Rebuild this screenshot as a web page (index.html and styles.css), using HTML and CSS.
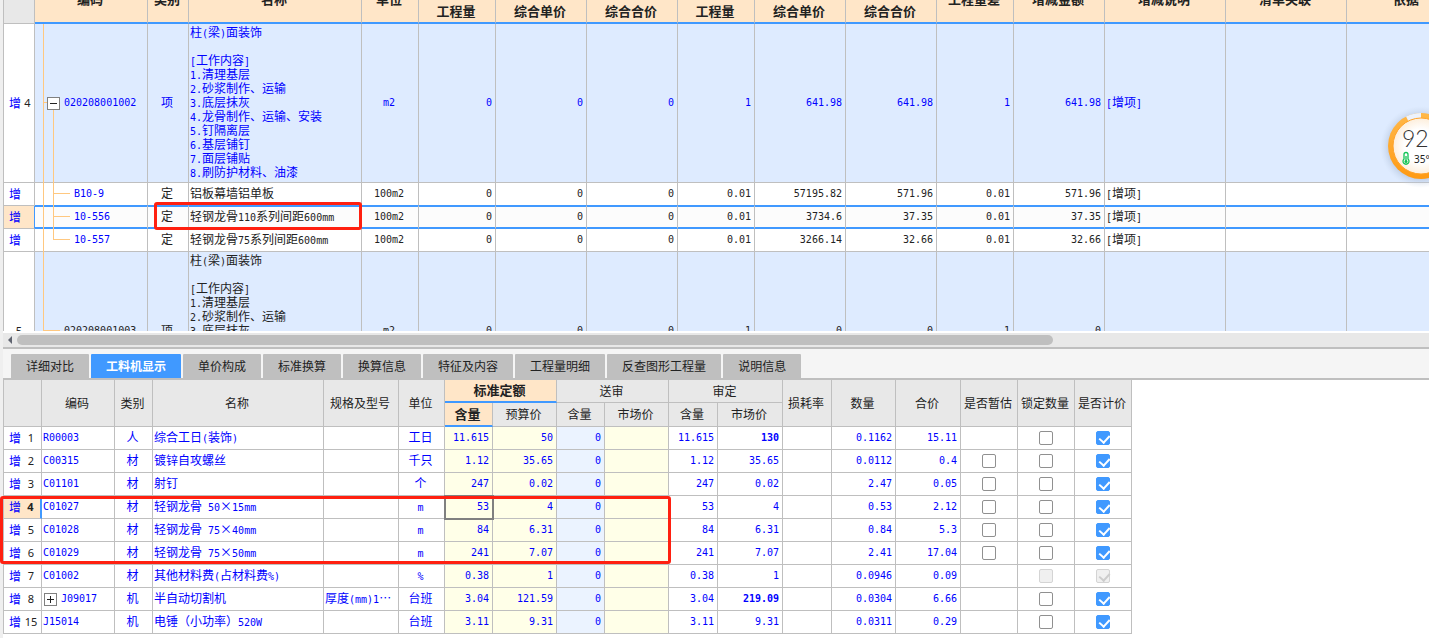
FILE: index.html
```html
<!DOCTYPE html>
<html lang="zh-CN">
<head>
<meta charset="utf-8">
<title>工料机显示</title>
<link rel="stylesheet" href="styles.css">
</head>
<body>
<section class="upper">
  <table class="grid bill">
    <colgroup>
      <col class="w31"><col class="w113"><col class="w41"><col class="w173"><col class="w57">
      <col class="w77"><col class="w91"><col class="w91"><col class="w77"><col class="w91"><col class="w91">
      <col class="w77"><col class="w91"><col class="w121"><col class="w121"><col class="w121">
    </colgroup>
    <thead>
      <tr>
        <th rowspan="2" class="corner"></th><th rowspan="2">编码</th><th rowspan="2">类别</th><th rowspan="2">名称</th><th rowspan="2">单位</th>
        <th colspan="3"></th><th colspan="3"></th>
        <th rowspan="2">工程量差</th><th rowspan="2">增减金额</th><th rowspan="2">增减说明</th><th rowspan="2">清单关联</th><th rowspan="2">依据</th>
      </tr>
      <tr><th>工程量</th><th>综合单价</th><th>综合合价</th><th>工程量</th><th>综合单价</th><th>综合合价</th></tr>
    </thead>
    <tbody>
      <tr class="item added">
        <td><div class="rowhead"><b>增</b><span>4</span></div></td>
        <td class="code"><i class="rail"></i><i class="stub"></i><i class="rail inner half"></i><button class="toggle" aria-label="020208001002"></button>020208001002</td>
        <td>项</td>
        <td class="name">柱<span class="n">(</span>梁<span class="n">)</span>面装饰<br><br><span class="n">[</span>工作内容<span class="n">]</span><br><span class="n">1.</span>清理基层<br><span class="n">2.</span>砂浆制作、运输<br><span class="n">3.</span>底层抹灰<br><span class="n">4.</span>龙骨制作、运输、安装<br><span class="n">5.</span>钉隔离层<br><span class="n">6.</span>基层铺钉<br><span class="n">7.</span>面层铺贴<br><span class="n">8.</span>刷防护材料、油漆</td>
        <td>m2</td><td>0</td><td>0</td><td>0</td><td>1</td><td>641.98</td><td>641.98</td><td>1</td><td>641.98</td>
        <td><span class="n">[</span>增项<span class="n">]</span></td><td></td><td></td>
      </tr>
      <tr class="before">
        <td><div class="rowhead"><b>增</b></div></td>
        <td class="code child"><i class="rail"></i><i class="rail inner"></i><i class="branch"></i>B10-9</td>
        <td>定</td><td class="name">铝板幕墙铝单板</td>
        <td>100m2</td><td>0</td><td>0</td><td>0</td><td>0.01</td><td>57195.82</td><td>571.96</td><td>0.01</td><td>571.96</td>
        <td><span class="n">[</span>增项<span class="n">]</span></td><td></td><td></td>
      </tr>
      <tr class="selected">
        <td><div class="rowhead"><b>增</b></div></td>
        <td class="code child"><i class="rail"></i><i class="rail inner"></i><i class="branch"></i>10-556</td>
        <td>定</td><td class="name">轻钢龙骨<span class="n">110</span>系列间距<span class="n">600mm</span><i class="mark mark-name"></i></td>
        <td>100m2</td><td>0</td><td>0</td><td>0</td><td>0.01</td><td>3734.6</td><td>37.35</td><td>0.01</td><td>37.35</td>
        <td><span class="n">[</span>增项<span class="n">]</span></td><td></td><td></td>
      </tr>
      <tr>
        <td><div class="rowhead"><b>增</b></div></td>
        <td class="code child"><i class="rail"></i><i class="rail inner last"></i><i class="branch"></i>10-557</td>
        <td>定</td><td class="name">轻钢龙骨<span class="n">75</span>系列间距<span class="n">600mm</span></td>
        <td>100m2</td><td>0</td><td>0</td><td>0</td><td>0.01</td><td>3266.14</td><td>32.66</td><td>0.01</td><td>32.66</td>
        <td><span class="n">[</span>增项<span class="n">]</span></td><td></td><td></td>
      </tr>
      <tr class="item">
        <td><div class="rowhead alone"><span>5</span></div></td>
        <td class="code"><i class="rail last"></i><i class="stub long"></i>020208001003</td>
        <td>项</td>
        <td class="name">柱<span class="n">(</span>梁<span class="n">)</span>面装饰<br><br><span class="n">[</span>工作内容<span class="n">]</span><br><span class="n">1.</span>清理基层<br><span class="n">2.</span>砂浆制作、运输<br><span class="n">3.</span>底层抹灰<br><br><br><br><br><br></td>
        <td>m2</td><td>0</td><td>0</td><td>0</td><td>1</td><td>0</td><td>0</td><td>1</td><td>0</td>
        <td></td><td></td><td></td>
      </tr>
    </tbody>
  </table>
</section>

<div class="scrollbar"><button class="arrow" aria-label="◀"></button><div class="track"><div class="thumb"></div></div></div>

<nav class="tabs">
  <button>详细对比</button><button class="active">工料机显示</button><button>单价构成</button><button>标准换算</button><button>换算信息</button><button>特征及内容</button><button>工程量明细</button><button>反查图形工程量</button><button>说明信息</button>
</nav>

<section class="lower">
  <table class="grid res">
    <colgroup>
      <col class="w38"><col class="w73"><col class="w38"><col class="w171"><col class="w75"><col class="w46">
      <col class="w48"><col class="w64"><col class="w48"><col class="w64"><col class="w49"><col class="w65">
      <col class="w49"><col class="w64"><col class="w65"><col class="w57"><col class="w57"><col class="w57">
    </colgroup>
    <thead>
      <tr>
        <th rowspan="2"></th><th rowspan="2">编码</th><th rowspan="2">类别</th><th rowspan="2">名称</th><th rowspan="2">规格及型号</th><th rowspan="2">单位</th>
        <th colspan="2" class="hot">标准定额</th><th colspan="2">送审</th><th colspan="2">审定</th>
        <th rowspan="2">损耗率</th><th rowspan="2">数量</th><th rowspan="2">合价</th>
        <th rowspan="2" id="h-est">是否暂估</th><th rowspan="2" id="h-lock">锁定数量</th><th rowspan="2" id="h-price">是否计价</th>
      </tr>
      <tr><th class="hot">含量</th><th>预算价</th><th>含量</th><th>市场价</th><th>含量</th><th>市场价</th></tr>
    </thead>
    <tbody>
      <tr><td><div class="rowhead"><b>增</b><span>1</span></div></td><td>R00003</td><td>人</td><td>综合工日<span class="n">(</span>装饰<span class="n">)</span></td><td></td><td>工日</td><td>11.615</td><td>50</td><td>0</td><td></td><td>11.615</td><td class="strong">130</td><td></td><td>0.1162</td><td>15.11</td><td></td><td><input type="checkbox" aria-labelledby="h-lock"></td><td><input type="checkbox" aria-labelledby="h-price" checked></td></tr>
      <tr><td><div class="rowhead"><b>增</b><span>2</span></div></td><td>C00315</td><td>材</td><td>镀锌自攻螺丝</td><td></td><td>千只</td><td>1.12</td><td>35.65</td><td>0</td><td></td><td>1.12</td><td>35.65</td><td></td><td>0.0112</td><td>0.4</td><td><input type="checkbox" aria-labelledby="h-est"></td><td><input type="checkbox" aria-labelledby="h-lock"></td><td><input type="checkbox" aria-labelledby="h-price" checked></td></tr>
      <tr><td><div class="rowhead"><b>增</b><span>3</span></div></td><td>C01101</td><td>材</td><td>射钉</td><td></td><td>个</td><td>247</td><td>0.02</td><td>0</td><td></td><td>247</td><td>0.02</td><td></td><td>2.47</td><td>0.05</td><td><input type="checkbox" aria-labelledby="h-est"></td><td><input type="checkbox" aria-labelledby="h-lock"></td><td><input type="checkbox" aria-labelledby="h-price" checked></td></tr>
      <tr class="current"><td><div class="rowhead"><b>增</b><span>4</span></div></td><td>C01027</td><td>材</td><td>轻钢龙骨<span class="n"> 50</span>×<span class="n">15mm</span></td><td></td><td><span class="n">m</span></td><td class="focus">53</td><td>4</td><td>0</td><td></td><td>53</td><td>4</td><td></td><td>0.53</td><td>2.12</td><td><input type="checkbox" aria-labelledby="h-est"></td><td><input type="checkbox" aria-labelledby="h-lock"></td><td><input type="checkbox" aria-labelledby="h-price" checked></td></tr>
      <tr><td><div class="rowhead"><b>增</b><span>5</span></div></td><td>C01028</td><td>材</td><td>轻钢龙骨<span class="n"> 75</span>×<span class="n">40mm</span></td><td></td><td><span class="n">m</span></td><td>84</td><td>6.31</td><td>0</td><td></td><td>84</td><td>6.31</td><td></td><td>0.84</td><td>5.3</td><td><input type="checkbox" aria-labelledby="h-est"></td><td><input type="checkbox" aria-labelledby="h-lock"></td><td><input type="checkbox" aria-labelledby="h-price" checked></td></tr>
      <tr><td><div class="rowhead"><b>增</b><span>6</span></div></td><td>C01029</td><td>材</td><td>轻钢龙骨<span class="n"> 75</span>×<span class="n">50mm</span></td><td></td><td><span class="n">m</span></td><td>241</td><td>7.07</td><td>0</td><td></td><td>241</td><td>7.07</td><td></td><td>2.41</td><td>17.04</td><td><input type="checkbox" aria-labelledby="h-est"></td><td><input type="checkbox" aria-labelledby="h-lock"></td><td><input type="checkbox" aria-labelledby="h-price" checked></td></tr>
      <tr><td><div class="rowhead"><b>增</b><span>7</span></div></td><td>C01002</td><td>材</td><td>其他材料费<span class="n">(</span>占材料费<span class="n">%)</span></td><td></td><td><span class="n">%</span></td><td>0.38</td><td>1</td><td>0</td><td></td><td>0.38</td><td>1</td><td></td><td>0.0946</td><td>0.09</td><td></td><td><input type="checkbox" aria-labelledby="h-lock" disabled></td><td><input type="checkbox" aria-labelledby="h-price" checked disabled></td></tr>
      <tr><td><div class="rowhead"><b>增</b><span>8</span></div></td><td><button class="toggle plus" aria-label="J09017"></button>J09017</td><td>机</td><td>半自动切割机</td><td>厚度<span class="n">(mm)1</span>…</td><td>台班</td><td>3.04</td><td>121.59</td><td>0</td><td></td><td>3.04</td><td class="strong">219.09</td><td></td><td>0.0304</td><td>6.66</td><td></td><td><input type="checkbox" aria-labelledby="h-lock"></td><td><input type="checkbox" aria-labelledby="h-price" checked></td></tr>
      <tr><td><div class="rowhead"><b>增</b><span>15</span></div></td><td>J15014</td><td>机</td><td>电锤（小功率）<span class="n">520W</span></td><td></td><td>台班</td><td>3.11</td><td>9.31</td><td>0</td><td></td><td>3.11</td><td>9.31</td><td></td><td>0.0311</td><td>0.29</td><td></td><td><input type="checkbox" aria-labelledby="h-lock"></td><td><input type="checkbox" aria-labelledby="h-price" checked></td></tr>
    </tbody>
  </table>
  <i class="mark mark-rows"></i>
</section>

<svg class="gauge" width="84" height="84" viewBox="0 0 84 84">
  <defs>
    <linearGradient id="ring" x1="0" y1="0" x2="0" y2="1"><stop offset="0" stop-color="#ffb849"/><stop offset="1" stop-color="#ff9a12"/></linearGradient>
    <radialGradient id="face"><stop offset="0.6" stop-color="#fff"/><stop offset="1" stop-color="#fdeedb"/></radialGradient>
    <radialGradient id="halo"><stop offset="0.76" stop-color="#a9b9d2" stop-opacity="0.6"/><stop offset="1" stop-color="#c8d6ea" stop-opacity="0"/></radialGradient>
  </defs>
  <circle cx="42" cy="43" r="41" fill="url(#halo)"/>
  <circle cx="42" cy="42" r="33" fill="url(#ring)"/>
  <path d="M42 42 L27 12.500 A33 33 0 0 1 42 9 Z" fill="#edf2fb"/>
  <circle cx="42" cy="42" r="28" fill="url(#face)" stroke="#ffa32a" stroke-width="1"/>
  <text x="23" y="43" class="gauge-num">92<tspan class="gauge-unit">%</tspan></text>
  <path d="M25 50.500 a2 2 0 0 1 4 0 v4.500 a3 3 0 1 1 -4 0 Z" fill="none" stroke="#12c455" stroke-width="1.300"/>
  <path d="M27 52 v5" stroke="#12c455" stroke-width="1.300"/><circle cx="27" cy="57.500" r="1.500" fill="#12c455"/>
  <text x="35" y="59" class="gauge-temp">35°C</text>
</svg>
</body>
</html>
```

FILE: styles.css
```css
* { box-sizing: border-box; }

body {
  margin: 0;
  height: 100vh;
  display: flex;
  flex-direction: column;
  position: relative;
  overflow: hidden;
  padding-left: 3px;
  background: #efefef;
  color: #222;
  font: 12px/14px "Noto Sans CJK SC", sans-serif;
}

button { margin: 0; padding: 0; border: 0; font: inherit; color: inherit; }

.upper { flex: 1; min-height: 0; overflow: hidden; background: #fff; }
.lower { position: relative; background: #fff; padding-bottom: 4px; }

/* Grid */
.grid {
  table-layout: fixed;
  width: 0;
  border-collapse: separate;
  border-spacing: 0;
  border-left: 1px solid #bfbfbf;
}
.grid th, .grid td {
  height: 23px;
  padding: 0 3px 2px 1px;
  border-right: 1px solid #bfbfbf;
  border-bottom: 1px solid #bfbfbf;
  white-space: nowrap;
  text-align: center;
  vertical-align: middle;
}
.grid th { background: #e8e8e8; font-weight: 400; padding: 0 2px 1px 0; }
.grid td:first-child { padding: 0 0 1px; background: #fff; }

.n, .grid .code, .bill td:nth-child(n+5):nth-child(-n+13),
.res td:nth-child(2), .res td:nth-child(n+7):nth-child(-n+15) {
  font-family: "DejaVu Sans Mono", monospace;
  font-size: 10px;
  padding-bottom: 0;
}
.n { white-space: pre; line-height: 1; }

.rowhead { display: flex; align-items: center; padding-left: 5px; }
.rowhead.alone { padding-left: 0; }
.rowhead b { color: #00f; font-weight: 400; flex: none; width: 12px; }
.rowhead span { flex: 1; text-align: center; font: 11px/14px "Noto Sans", sans-serif; }

.w31 { width: 31px; } .w38 { width: 38px; } .w41 { width: 41px; } .w46 { width: 46px; }
.w48 { width: 48px; } .w49 { width: 49px; } .w57 { width: 57px; } .w64 { width: 64px; }
.w65 { width: 65px; } .w73 { width: 73px; } .w75 { width: 75px; }
.w77 { width: 77px; } .w91 { width: 91px; } .w113 { width: 113px; } .w121 { width: 121px; }
.w171 { width: 171px; } .w173 { width: 173px; }

/* Bill table: the group header row is scrolled out of view */
.bill { margin-top: -24px; }
.bill th { height: 24px; background: #ffe6c8; font-weight: 700; font-size: 13px; }
.bill thead tr:first-child th[rowspan], .bill thead tr:last-child th { border-bottom: 2px solid #4099ff; }
.bill thead tr:first-child th.corner { background: #e8e8e8; border-bottom: 1px solid #bfbfbf; }
.bill td:nth-child(n+6):nth-child(-n+13) { text-align: right; }
.bill td:nth-child(14) { text-align: left; }
.bill .name, .bill .code { text-align: left; }
.bill .code { position: relative; padding-left: 29px; }
.bill .code.child { padding-left: 39px; color: #00f; }
.item td { height: 159px; background: #deebff; }
.added td { color: #00f; }
.added .rowhead span { color: #222; }

.before td:not(:first-child) { border-bottom-color: #4099ff; }
.selected td { background: #fcfcfc; border-bottom-color: #4099ff; box-shadow: inset 0 1px #4099ff, inset 0 -1px #4099ff; }
.grid .selected td:first-child { background: #ffe6c8; border-right-color: #4099ff; border-bottom-color: #bfbfbf; box-shadow: none; }
.selected .name { position: relative; }

.rail, .stub, .branch { position: absolute; background: #ffc880; }
.rail { left: 8px; top: 0; bottom: -1px; width: 1px; }
.rail.inner { left: 18px; }
.rail.half { top: 50%; }
.rail.last { bottom: 50%; }
.stub, .branch { top: calc(50% - 1px); height: 1px; }
.stub { left: 8px; width: 4px; }
.stub.long { width: 17px; }
.branch { left: 18px; width: 17px; }

.toggle {
  position: relative;
  width: 13px;
  height: 13px;
  margin: 0 4px 0 1px;
  border: 1px solid #808080;
  background: #fff;
  vertical-align: middle;
}
.bill .toggle { margin-left: -17px; }
.toggle::before, .toggle.plus::after { content: ""; position: absolute; left: 2px; top: 5px; width: 7px; height: 1px; background: #222; }
.toggle.plus::after { left: 5px; top: 2px; width: 1px; height: 7px; }

/* Scrollbar */
.scrollbar { display: flex; align-items: center; height: 18px; border-top: 2px solid #fff; border-bottom: 2px solid #bfbfbf; background: #e8e8e8; }
.arrow { flex: none; width: 14px; height: 14px; background: transparent; }
.arrow::before { content: ""; display: block; width: 0; margin-left: 5px; border: 4px solid transparent; border-right: 4px solid #606470; border-left: 0; }
.track { flex: 1; }
.thumb { width: 73.4%; height: 10px; border-radius: 5px; background: #bfbfbf; }

/* Tabs */
.tabs { display: flex; gap: 2px; padding: 5px 8px 0; background: #f5f5f5; border-bottom: 2px solid #bfbfbf; }
.tabs button { height: 24px; padding: 0 15px; background: #bfbfbf; border-radius: 1px 1px 0 0; }
.tabs .active { background: #4099ff; color: #fff; font-weight: 700; }

/* Resource table */
.res td { color: #00f; }
.res thead tr:last-child th { height: 24px; }
.res th.hot { background: #ffe6c8; font-weight: 700; font-size: 13px; border-bottom: 2px solid #4099ff; }
.res .rowhead span { color: #222; }
.res td:nth-child(2), .res td:nth-child(4), .res td:nth-child(5) { text-align: left; }
.res td:nth-child(n+7):nth-child(-n+15) { text-align: right; }
.res td:nth-child(n+16) { padding: 0; }
.res td:nth-child(7), .res td:nth-child(8), .res td:nth-child(10) { background: #ffffe8; }
.res td:nth-child(9) { background: #ebf3ff; }
.res .strong { font-weight: 700; }
.grid .current td:first-child { background: #ffe6c8; border-right: 2px solid #4099ff; }
.current .rowhead span { font-weight: 700; }
.current .focus { outline: 2px solid #808080; outline-offset: -1px; }

input[type="checkbox"] {
  appearance: none;
  position: relative;
  display: block;
  width: 14px;
  height: 14px;
  margin: 0 auto;
  border: 1px solid #909090;
  border-radius: 2px;
  background: #fff;
}
input[type="checkbox"]:checked { border-color: #4099ff; background: #4099ff; }
input:checked::after {
  content: "";
  position: absolute;
  left: 4px;
  top: 1px;
  width: 5px;
  height: 8px;
  border: solid #fff;
  border-width: 0 2px 2px 0;
  transform: rotate(42deg);
}
input[type="checkbox"]:disabled { border-color: #d4d4d4; background: #f0f0f0; }
input:disabled::after { border-color: #ccc; }

/* Red review marks */
.mark { position: absolute; border: 3px solid #ff2010; border-radius: 3px; pointer-events: none; }
.mark-name { left: -35px; right: -1px; top: -4px; bottom: -2px; }
.mark-rows { left: -3px; top: 116px; width: 671px; height: 68px; }

/* Floating gauge */
.gauge { position: absolute; right: -34px; top: 104px; }
.gauge-num { font: 300 23px Lato, sans-serif; fill: #333; }
.gauge-unit { font-size: 12px; }
.gauge-temp { font: 10px "Noto Sans", sans-serif; fill: #222; }
```
